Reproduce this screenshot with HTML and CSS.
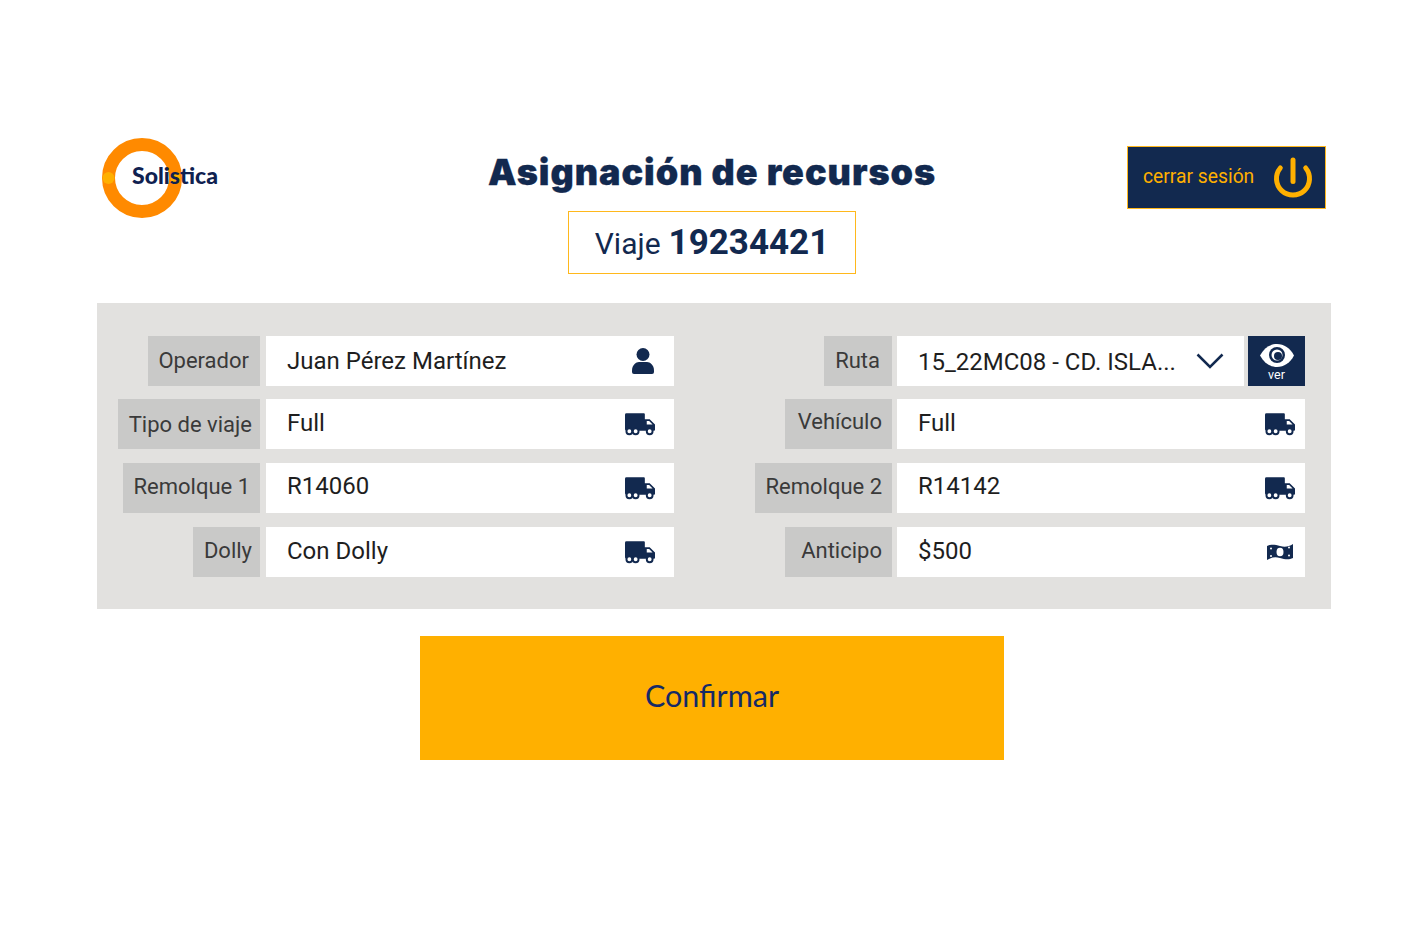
FILE: index.html
```html
<!DOCTYPE html>
<html lang="es">
<head>
<meta charset="utf-8">
<title>Asignación de recursos</title>
<link rel="stylesheet" href="styles.css">
</head>
<body>
<svg class="defs" width="0" height="0" aria-hidden="true">
  <symbol id="truck" viewBox="0 0 31 23">
    <path d="M1.500 0H19.500A1 1 0 0 1 20.500 1V6H25.500L31 11.500V17A1 1 0 0 1 30 18H1.500A1.500 1.500 0 0 1 0 16.500V1.500A1.500 1.500 0 0 1 1.500 0Z"/>
    <path class="cut" d="M22.500 8H25L28.500 11.500H22.500Z"/>
    <circle class="wheel" cx="4.500" cy="18.500" r="3"/>
    <circle class="wheel" cx="11" cy="18.500" r="3"/>
    <circle class="wheel" cx="25.500" cy="18.500" r="3"/>
  </symbol>
</svg>
<main class="page">
  <header class="top">
    <div class="logo">
      <svg class="logo-mark" viewBox="0 0 80 80" aria-hidden="true">
        <circle class="ring" cx="40" cy="40" r="33.500"/>
        <circle class="dot" cx="6.500" cy="40" r="6"/>
        <circle class="dot" cx="73.500" cy="40" r="5"/>
      </svg>
      <span class="logo-text">Solistica</span>
    </div>
    <div class="heading">
      <h1>Asignación de recursos</h1>
      <div class="trip">Viaje <b>19234421</b></div>
    </div>
    <div class="top-end">
      <button class="logout" type="button">
        <span>cerrar sesión</span>
        <svg class="power" viewBox="0 0 40 44" aria-hidden="true">
          <path d="M7.300 12A16.500 16.500 0 1 0 32.700 12"/>
          <path d="M20 4V25.500"/>
        </svg>
      </button>
    </div>
  </header>

  <section class="panel">
    <div class="field">
      <label class="tag tag-operador">Operador</label>
      <div class="value value-first"><span>Juan Pérez Martínez</span>
        <svg class="ico ico-person" viewBox="0 0 22 26" aria-hidden="true"><circle cx="11" cy="6.500" r="6.500"/><path d="M0 22.500C0 17 4 14 7 14H15C18 14 22 17 22 22.500V24A2 2 0 0 1 20 26H2A2 2 0 0 1 0 24Z"/></svg>
      </div>
    </div>
    <div class="field">
      <label class="tag tag-ruta">Ruta</label>
      <div class="value value-route"><span>15_22MC08 - CD. ISLA...</span>
        <svg class="chev" viewBox="0 0 28 16" aria-hidden="true"><path d="M1.500 1.500L14 14L26.500 1.500"/></svg>
      </div>
      <button class="see" type="button">
        <svg class="eye" viewBox="0 0 34 23" aria-hidden="true">
          <path class="eye-white" d="M0 11.500C4 4 10 0 17 0S30 4 34 11.500C30 19 24 23 17 23S4 19 0 11.500Z"/>
          <circle class="eye-dark" cx="17" cy="11" r="8"/>
          <circle class="eye-white" cx="17" cy="11" r="5.500"/>
          <circle class="eye-dark" cx="18" cy="12" r="4"/>
        </svg>
        <span>ver</span>
      </button>
    </div>

    <div class="field">
      <label class="tag tag-tipo">Tipo de viaje</label>
      <div class="value value-full"><span>Full</span><svg class="ico ico-truck"><use href="#truck"/></svg></div>
    </div>
    <div class="field">
      <label class="tag tag-vehiculo">Vehículo</label>
      <div class="value value-full"><span>Full</span><svg class="ico ico-truck ico-truck-r"><use href="#truck"/></svg></div>
    </div>

    <div class="field">
      <label class="tag tag-rem1">Remolque 1</label>
      <div class="value value-up"><span>R14060</span><svg class="ico ico-truck"><use href="#truck"/></svg></div>
    </div>
    <div class="field">
      <label class="tag tag-rem2">Remolque 2</label>
      <div class="value value-up"><span>R14142</span><svg class="ico ico-truck ico-truck-r"><use href="#truck"/></svg></div>
    </div>

    <div class="field">
      <label class="tag tag-dolly">Dolly</label>
      <div class="value"><span>Con Dolly</span><svg class="ico ico-truck"><use href="#truck"/></svg></div>
    </div>
    <div class="field">
      <label class="tag tag-anticipo">Anticipo</label>
      <div class="value"><span>$500</span>
        <svg class="ico ico-money" viewBox="0 0 26 18" aria-hidden="true">
          <path d="M0 3C4 1 8 1.500 13 3S22 3.500 26 1V15C22 17 18 16.500 13 15S4 14.500 0 17Z"/>
          <ellipse class="cut" cx="13" cy="9" rx="3.500" ry="4.300"/>
          <circle class="cut" cx="4" cy="5.500" r="1"/>
          <circle class="cut" cx="22" cy="4.500" r="1"/>
          <circle class="cut" cx="4" cy="13" r="1"/>
          <circle class="cut" cx="22" cy="12.500" r="1"/>
        </svg>
      </div>
    </div>
  </section>

  <div class="actions">
    <button class="confirm" type="button">Confirmar</button>
  </div>
</main>
</body>
</html>
```

FILE: styles.css
```css
* { box-sizing: border-box; }
html, body { margin: 0; padding: 0; background: #fff; }
body { font-family: Roboto, "Liberation Sans", sans-serif; color: #222; }
.defs { position: absolute; }
button { font: inherit; border: 0; cursor: pointer; }

.page { width: 1424px; height: 936px; padding: 138px 93px 0 97px; }

.top { width: 1230px; display: grid; grid-template-columns: 1fr auto 1fr; height: 136px; }
.logo { position: relative; width: 80px; height: 80px; margin-left: 5px; }
.logo-mark { display: block; width: 80px; height: 80px; }
.ring { fill: none; stroke: #ff8a00; stroke-width: 13; }
.dot { fill: #ffb000; }
.logo-text { position: absolute; left: 30px; top: 22px; font: 900 23px/30px Lato, sans-serif; color: #0f2150; white-space: nowrap; }

.heading { display: flex; flex-direction: column; align-items: center; }
h1 { margin: 13px 0 0; font: 900 36px/42px Inter, sans-serif; letter-spacing: 0.95px; -webkit-text-stroke: 0.3px #12294f; color: #12294f; white-space: nowrap; }
.trip { width: 288px; height: 63px; margin-top: 18px; padding-top: 10px; border: 1px solid #ffb81c; display: flex; justify-content: center; align-items: baseline; gap: 8px; font-size: 30px; color: #12294f; }
.trip b { font-size: 35px; font-weight: 700; }

.top-end { display: flex; justify-content: flex-end; align-items: flex-start; padding: 8px 1px 0 0; }
.logout { width: 199px; height: 63px; padding: 0 12px 0 15px; background: #12294f; border: 1px solid #ffb81c; color: #ffb000; font-size: 19.300px; display: flex; justify-content: space-between; align-items: center; }
.logout span { margin-bottom: 3px; }
.power { width: 40px; height: 44px; fill: none; stroke: #ffb000; stroke-width: 5; stroke-linecap: round; }

.panel { margin-top: 29px; width: 1234px; height: 306px; padding-top: 33px; background: #e2e1df; display: grid; grid-template-columns: 577px 631px; grid-template-rows: 63px 64px 64px 50px; }

.field { display: flex; justify-content: flex-end; align-items: flex-start; }
.tag { height: 50px; margin-right: 6px; display: flex; justify-content: flex-end; align-items: center; background: #c9c9c8; color: #3a3a3a; font-size: 22px; white-space: nowrap; }
.tag-operador { width: 112px; padding: 0 11px 2px 0; }
.tag-tipo { width: 142px; padding-right: 8px; }
.tag-rem1 { width: 137px; padding: 0 10px 4px 0; }
.tag-dolly { width: 67px; padding: 0 8px 4px 0; }
.tag-ruta { width: 68px; margin-right: 5px; padding: 0 12px 2px 0; }
.tag-vehiculo { width: 107px; margin-right: 5px; padding: 0 10px 5px 0; }
.tag-rem2 { width: 137px; margin-right: 5px; padding: 0 10px 4px 0; }
.tag-anticipo { width: 107px; margin-right: 5px; padding: 0 10px 4px 0; }

.value { width: 408px; height: 50px; padding: 0 18px 0 21px; background: #fff; display: flex; justify-content: space-between; align-items: center; font-size: 24px; color: #1e1e1e; }
.value > span { margin-bottom: 2px; }
.value-first > span { margin-bottom: 0; }
.value-full > span { margin-bottom: 2px; }
.value-up > span { margin-bottom: 4px; }
.value-route { width: 347px; padding-right: 20px; margin-right: 4px; }
.value-route > span { margin: 2px 0 0; }
.ico { display: block; fill: #12294f; }
.ico-person { width: 22px; height: 26px; margin-right: 2px; }
.ico-truck { width: 30px; height: 23px; margin-right: 1px; }
.ico-truck-r { margin-right: -8px; }
.ico-money { width: 26px; height: 18px; margin-right: -6px; }
.cut, .wheel { fill: #fff; }
.wheel { stroke: #12294f; stroke-width: 2; }
.chev { width: 28px; height: 16px; fill: none; stroke: #12294f; stroke-width: 2.500; }

.see { width: 57px; height: 50px; padding: 8px 0 0; background: #12294f; color: #fff; font-size: 12.500px; line-height: 14px; display: flex; flex-direction: column; align-items: center; gap: 1px; }
.eye { width: 34px; height: 23px; flex: none; }
.eye-white { fill: #fff; }
.eye-dark { fill: #12294f; }

.actions { width: 1230px; display: flex; justify-content: center; padding-top: 27px; }
.confirm { width: 584px; height: 124px; padding-bottom: 6px; background: #ffb000; color: #152a66; font: 400 30.500px/1 Lato, sans-serif; }
```
